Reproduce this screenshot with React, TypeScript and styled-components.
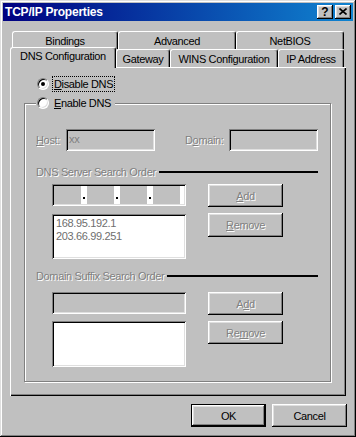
import React from "react";
import styled, { createGlobalStyle, css } from "styled-components";

const GlobalStyle = createGlobalStyle`
  html, body { margin: 0; padding: 0; background: #c0c0c0; }
  body {
    font-family: "Liberation Sans", Arial, sans-serif;
    font-size: 11px;
    letter-spacing: -0.35px;
    color: #000;
  }
  * { box-sizing: border-box; }
`;

const raised = css`
  box-shadow: inset -1px -1px #000, inset 1px 1px #fff, inset -2px -2px #808080, inset 2px 2px #dfdfdf;
`;
const sunken = css`
  box-shadow: inset 1px 1px #808080, inset -1px -1px #fff, inset 2px 2px #000, inset -2px -2px #dfdfdf;
`;
const disabledText = css`
  color: #808080;
  text-shadow: 1px 1px 0 #fff;
`;

const Window = styled.div`
  width: 356px;
  height: 437px;
  background: #c0c0c0;
  padding: 3px;
  box-shadow: inset -1px -1px #000, inset 1px 1px #dfdfdf, inset -2px -2px #808080, inset 2px 2px #fff;
  display: flex;
  flex-direction: column;
`;

const TitleBar = styled.div`
  height: 18px;
  display: flex;
  align-items: center;
  padding: 0 2px 0 2px;
  background: linear-gradient(90deg, #000080, #1084d0);
`;

const Title = styled.div`
  flex: 1;
  color: #fff;
  font-weight: bold;
  font-size: 12px;
  letter-spacing: -0.2px;
`;

const CaptionButton = styled.div<{ $gap?: number }>`
  width: 16px;
  height: 14px;
  margin-left: ${(p) => p.$gap ?? 0}px;
  background: #c0c0c0;
  ${raised};
  display: flex;
  align-items: center;
  justify-content: center;
  font-weight: bold;
  font-size: 12px;
  line-height: 1;
  letter-spacing: 0;
  padding-bottom: 1px;
`;

const Body = styled.div`
  display: flex;
  flex-direction: column;
  padding: 10px 7px 0 7px;
`;

const TabRow = styled.div<{ $indent: number }>`
  display: flex;
  align-items: flex-end;
  height: 18px;
  margin-left: ${(p) => p.$indent}px;
`;

const Tab = styled.div<{ $w: number; $active?: boolean }>`
  width: ${(p) => p.$w}px;
  height: ${(p) => (p.$active ? 21 : 18)}px;
  margin-bottom: ${(p) => (p.$active ? -1 : 0)}px;
  position: ${(p) => (p.$active ? "relative" : "static")};
  z-index: ${(p) => (p.$active ? 1 : "auto")};
  background: #c0c0c0;
  border-top: 1px solid #fff;
  border-left: 1px solid #fff;
  border-right: 1px solid #000;
  border-radius: 3px 3px 0 0;
  box-shadow: inset -1px 0 #808080;
  display: flex;
  align-items: ${(p) => (p.$active ? "flex-start" : "center")};
  padding-top: ${(p) => (p.$active ? 2 : 0)}px;
  justify-content: center;
  white-space: nowrap;
`;

const Panel = styled.div`
  height: 329px;
  background: #c0c0c0;
  box-shadow: inset 1px 1px #fff, inset -1px -1px #000, inset -2px -2px #808080;
  padding: 9px 15px 0 14px;
  display: flex;
  flex-direction: column;
`;

const RadioRow = styled.div<{ $indent?: number }>`
  display: flex;
  align-items: center;
  height: 16px;
  margin-left: ${(p) => p.$indent ?? 0}px;
  gap: 3px;
`;

const RadioCircle = styled.div<{ $checked?: boolean }>`
  width: 12px;
  height: 12px;
  border-radius: 50%;
  background: #fff;
  border: 1px solid;
  border-color: #808080 #fff #fff #808080;
  box-shadow: inset 1px 1px #000, inset -1px -1px #dfdfdf;
  display: flex;
  align-items: center;
  justify-content: center;
  &::after {
    content: "";
    width: 4px;
    height: 4px;
    border-radius: 50%;
    background: ${(p) => (p.$checked ? "#000" : "transparent")};
  }
`;

const RadioLabel = styled.span<{ $focus?: boolean }>`
  padding: 0 1px;
  line-height: 14px;
  border: 1px ${(p) => (p.$focus ? "dotted #000" : "solid transparent")};
`;

const GroupBox = styled.fieldset`
  margin: 3px 0 0 0;
  width: 307px;
  padding: 0 12px 14px 11px;
  border: 1px solid #808080;
  box-shadow: inset 1px 1px #fff, 1px 1px #fff;
  display: flex;
  flex-direction: column;
`;

const Legend = styled.legend`
  padding: 0 2px 0 1px;
  background: #c0c0c0;
`;

const FieldRow = styled.div`
  display: flex;
  align-items: center;
  margin-top: 18px;
  height: 22px;
`;

const FieldLabel = styled.span<{ $w: number; $ml?: number }>`
  width: ${(p) => p.$w}px;
  margin-left: ${(p) => p.$ml ?? 0}px;
  ${disabledText};
`;

const TextBox = styled.div<{ $w: number; $h?: number; $white?: boolean }>`
  width: ${(p) => p.$w}px;
  height: ${(p) => p.$h ?? 22}px;
  background: ${(p) => (p.$white ? "#fff" : "#c0c0c0")};
  ${sunken};
  padding: 3px 3px;
  color: #808080;
  line-height: 14px;
`;

const SectionHeader = styled.div<{ $mt: number }>`
  display: flex;
  align-items: center;
  height: 14px;
  margin-top: ${(p) => p.$mt}px;
  ${disabledText};
  white-space: nowrap;
`;

const SectionLine = styled.div`
  flex: 1;
  height: 2px;
  margin-left: 3px;
  background: #000;
  text-shadow: none;
`;

const ListRow = styled.div<{ $mt: number }>`
  display: flex;
  margin-top: ${(p) => p.$mt}px;
  padding-left: 16px;
  gap: 22px;
`;

const Column = styled.div<{ $w: number; $gap: number }>`
  width: ${(p) => p.$w}px;
  display: flex;
  flex-direction: column;
  gap: ${(p) => p.$gap}px;
`;

const IPField = styled.div`
  width: 134px;
  height: 22px;
  ${sunken};
  padding: 2px;
  display: flex;
`;

const IPSeg = styled.div`
  width: 27px;
  background: #c0c0c0;
`;

const IPDot = styled.div<{ $w?: number }>`
  width: ${(p) => p.$w ?? 6}px;
  background: #fff;
  display: flex;
  align-items: flex-end;
  justify-content: center;
  padding-bottom: 5px;
  &::after {
    content: "";
    width: 2px;
    height: 2px;
    background: ${(p) => (p.$w ? "transparent" : "#000")};
  }
`;

const ListBox = styled.div<{ $h: number }>`
  width: 134px;
  height: ${(p) => p.$h}px;
  background: #fff;
  ${sunken};
  padding: 3px 4px;
  color: #6e6e6e;
  line-height: 13px;
`;

const Button = styled.div<{ $disabled?: boolean; $default?: boolean; $h?: number }>`
  width: 75px;
  height: ${(p) => p.$h ?? 23}px;
  background: #c0c0c0;
  display: flex;
  align-items: center;
  justify-content: center;
  ${(p) =>
    p.$default
      ? css`
          border: 1px solid #000;
          ${raised};
        `
      : raised};
  ${(p) => (p.$disabled ? disabledText : "color: #000;")};
`;

const Footer = styled.div`
  display: flex;
  justify-content: flex-end;
  gap: 6px;
  margin-top: 8px;
  margin-right: -1px;
`;

export default function App() {
  return (
    <>
      <GlobalStyle />
      <Window>
        <TitleBar>
          <Title>TCP/IP Properties</Title>
          <CaptionButton>?</CaptionButton>
          <CaptionButton $gap={2}>
            <svg width="8" height="7" viewBox="0 0 8 7">
              <path d="M0.5 0.5 L7.5 6.5 M7.5 0.5 L0.5 6.5" stroke="#000" strokeWidth="1.6" />
            </svg>
          </CaptionButton>
        </TitleBar>
        <Body>
          <TabRow $indent={2}>
            <Tab $w={106}>Bindings</Tab>
            <Tab $w={118}>Advanced</Tab>
            <Tab $w={108}>NetBIOS</Tab>
          </TabRow>
          <TabRow $indent={0}>
            <Tab $w={106} $active>DNS Configuration</Tab>
            <Tab $w={54}>Gateway</Tab>
            <Tab $w={108}>WINS Configuration</Tab>
            <Tab $w={66}>IP Address</Tab>
          </TabRow>
          <Panel>
            <RadioRow $indent={13}>
              <RadioCircle $checked />
              <RadioLabel $focus>
                <u>D</u>isable DNS
              </RadioLabel>
            </RadioRow>
            <GroupBox>
              <Legend>
                <RadioRow>
                  <RadioCircle />
                  <RadioLabel>
                    <u>E</u>nable DNS
                  </RadioLabel>
                </RadioRow>
              </Legend>
              <FieldRow>
                <FieldLabel $w={30}>
                  <u>H</u>ost:
                </FieldLabel>
                <TextBox $w={89}>xx</TextBox>
                <FieldLabel $w={44} $ml={30}>
                  D<u>o</u>main:
                </FieldLabel>
                <TextBox $w={89} />
              </FieldRow>
              <SectionHeader $mt={14}>
                DNS Server Search Order
                <SectionLine />
              </SectionHeader>
              <ListRow $mt={5}>
                <Column $w={134} $gap={8}>
                  <IPField>
                    <IPSeg />
                    <IPDot />
                    <IPSeg />
                    <IPDot />
                    <IPSeg />
                    <IPDot />
                    <IPSeg />
                    <IPDot $w={4} />
                  </IPField>
                  <ListBox $h={45}>
                    168.95.192.1
                    <br />
                    203.66.99.251
                  </ListBox>
                </Column>
                <Column $w={75} $gap={6}>
                  <Button $disabled>
                    <u>A</u>dd
                  </Button>
                  <Button $disabled $h={24}>
                    <u>R</u>emove
                  </Button>
                </Column>
              </ListRow>
              <SectionHeader $mt={10}>
                Domain Suffix Search Order
                <SectionLine />
              </SectionHeader>
              <ListRow $mt={9}>
                <Column $w={134} $gap={7}>
                  <TextBox $w={134} />
                  <ListBox $h={46} />
                </Column>
                <Column $w={75} $gap={6}>
                  <Button $disabled>
                    A<u>d</u>d
                  </Button>
                  <Button $disabled>
                    Re<u>m</u>ove
                  </Button>
                </Column>
              </ListRow>
            </GroupBox>
          </Panel>
          <Footer>
            <Button $default>OK</Button>
            <Button>Cancel</Button>
          </Footer>
        </Body>
      </Window>
    </>
  );
}
